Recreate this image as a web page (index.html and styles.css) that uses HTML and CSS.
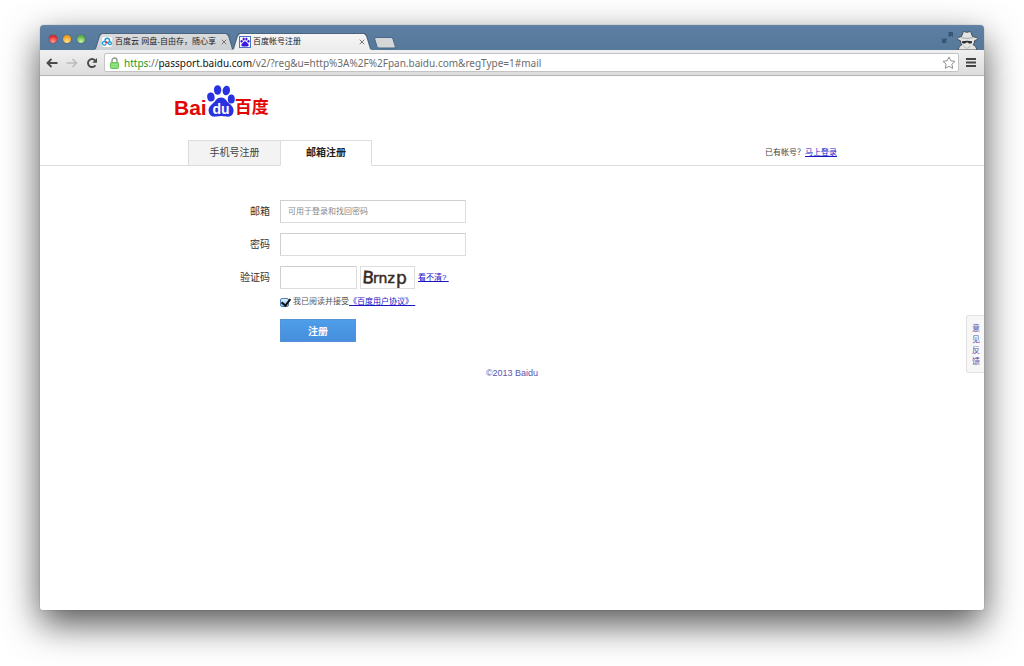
FILE: index.html
```html
<!DOCTYPE html>
<html lang="zh-CN">

<head>
    <meta charset="UTF-8">
    <meta name="viewport" content="width=device-width, initial-scale=1.0">
    <title>百度帐号注册</title>
    <link rel="stylesheet" href="styles.css">
</head>

<body>
    <div class="window">
        <header class="title-bar">
            <div class="window-buttons">
                <button type="button" class="light light-red" aria-label="关闭"></button>
                <button type="button" class="light light-yellow" aria-label="最小化"></button>
                <button type="button" class="light light-green" aria-label="缩放"></button>
            </div>

            <div class="browser-tabs">
                <div class="browser-tab">
                    <svg class="favicon" viewBox="0 0 12 12">
                        <rect x="1" y="1" width="10" height="10" rx="2" fill="#fff"/>
                        <circle cx="6.3" cy="4.5" r="2.3" fill="none" stroke="#1e9be8" stroke-width="1.4"/>
                        <path d="M5 7.600a1.800 1.800 0 1 1-.6-1.700" fill="none" stroke="#1e9be8" stroke-width="1.300"/>
                        <path d="M6.500 6.200l2 2.500a1.500 1.500 0 1 0 .2-2.900" fill="none" stroke="#1e9be8" stroke-width="1.300"/>
                        <circle cx="5.300" cy="6.400" r="1.100" fill="#e2382f"/>
                    </svg>
                    <span class="tab-title">百度云 网盘-自由存，随心享</span>
                    <button type="button" class="tab-close" aria-label="关闭标签页">
                        <svg viewBox="0 0 6 6"><path d="M.7.7l4.6 4.6M5.3.7L.7 5.3"/></svg>
                    </button>
                </div>
                <div class="browser-tab active">
                    <svg class="favicon" viewBox="0 0 12 12">
                        <rect x=".5" y=".5" width="11" height="11" fill="#fff" stroke="#4a74c8"/>
                        <g fill="#3a18e0">
                            <ellipse cx="2.6" cy="5.3" rx="1.1" ry="1.4"/>
                            <ellipse cx="4.7" cy="3" rx="1.1" ry="1.5"/>
                            <ellipse cx="7.4" cy="3" rx="1.1" ry="1.5"/>
                            <ellipse cx="9.5" cy="5.3" rx="1.1" ry="1.4"/>
                            <path d="M6 5.2c1.3 0 1.6 1.2 2.5 2s1.4 1.3 1.1 2.2c-.4 1.2-1.8 1.2-3.6 1s-3.2.2-3.6-1c-.3-.9.2-1.4 1.1-2.2s1.2-2 2.5-2z"/>
                        </g>
                    </svg>
                    <span class="tab-title">百度帐号注册</span>
                    <button type="button" class="tab-close" aria-label="关闭标签页">
                        <svg viewBox="0 0 6 6"><path d="M.7.7l4.6 4.6M5.3.7L.7 5.3"/></svg>
                    </button>
                </div>
                <button type="button" class="new-tab" aria-label="新标签页">
                    <svg viewBox="0 0 22 12"><path d="M2 .5h15q1.500 0 2 1.500l2.300 7.500q.3 1.500-1.300 1.500H5q-1.500 0-2-1.500L.7 2Q.4.5 2 .5z" fill="#d4d6d8" stroke="#48678a"/></svg>
                </button>
            </div>

            <button type="button" class="fullscreen" aria-label="全屏">
                <svg viewBox="0 0 11 11" fill="#2f4b68">
                    <path d="M5.800 0H11v5.200L9.300 3.500 7.700 5.100 5.900 3.300 7.500 1.700zM5.200 11H0V5.800L1.700 7.500l1.600-1.600 1.800 1.800L3.500 9.300z"/>
                </svg>
            </button>
            <svg class="incognito" viewBox="0 0 22 19">
                <path d="M5.500 5.500L7 1.500Q7.400.4 8.700.7l2.300.6 2.300-.6q1.300-.3 1.700.8l1.500 4q5 .8 5 2.100 0 1.400-2.800 2-.1 3-1.700 4.100 3.200.8 4 5.300H2q.8-4.500 4-5.300Q4.400 12.600 4.300 9.600q-2.800-.6-2.800-2 0-1.300 4-2.100z" fill="#e4e4e2" stroke="#454d55"/>
                <path d="M5.500 6q5.500 1.600 11 0l.3 1.300q-5.800 1.500-11.600 0z" fill="#b0b1b1"/>
                <path d="M5.800 10.200q5.200-.8 10.400 0l-.4 1.800q-2.200 1.400-3.900-.6h-1.800q-1.700 2-3.900.6z" fill="#2b2c2d"/>
                <path d="M7 15l4 2.500 4-2.500" fill="none" stroke="#bbb"/>
            </svg>
        </header>

        <nav class="toolbar">
            <button type="button" class="tool" aria-label="后退">
                <svg viewBox="0 0 12 10"><path d="M11.500 5H1.800M5.500 1L1.500 5l4 4" fill="none" stroke="#4a4a4a" stroke-width="1.900"/></svg>
            </button>
            <button type="button" class="tool" aria-label="前进">
                <svg viewBox="0 0 12 10"><path d="M.5 5h9.700M6.500 1l4 4-4 4" fill="none" stroke="#bcbcbc" stroke-width="1.700"/></svg>
            </button>
            <button type="button" class="tool" aria-label="重新加载">
                <svg viewBox="0 0 12 10"><path d="M9.400 7.200A4 4 0 1 1 9 2.400" fill="none" stroke="#4a4a4a" stroke-width="1.900"/><path d="M11 0v4.800H6.300z" fill="#4a4a4a"/></svg>
            </button>
            <div class="address-bar">
                <svg class="lock" viewBox="0 0 9 12">
                    <path d="M2 6V3.500a2.500 2.500 0 0 1 5 0V6" fill="none" stroke="#8f9a8c" stroke-width="1.400"/>
                    <rect x=".5" y="5.500" width="8" height="6" rx=".8" fill="#7edb6c" stroke="#6cc25f"/>
                    <path d="M1.500 7.500h6M1.500 9.500h6" stroke="#98e58a"/>
                </svg>
                <div class="url" role="textbox" contenteditable="true" spellcheck="false" aria-label="地址"><span class="scheme">https</span>://<span class="host">passport.baidu.com</span>/v2/?reg&amp;u=http%3A%2F%2Fpan.baidu.com&amp;regType=1#mail</div>
                <button type="button" class="star" aria-label="收藏">
                    <svg viewBox="0 0 14 13"><path d="M7 .9l1.800 3.900 4.200.5-3.100 2.900.8 4.200L7 10.300l-3.700 2.100.8-4.200L1 5.300l4.200-.5z" fill="#fff" stroke="#909090"/></svg>
                </button>
            </div>
            <button type="button" class="menu" aria-label="菜单">
                <svg viewBox="0 0 10 9"><path d="M0 1h10M0 4.500h10M0 8h10" stroke="#444" stroke-width="2"/></svg>
            </button>
        </nav>

        <main class="page">
            <div class="container">
                <a href="/" class="logo" aria-label="百度首页">
                    <span class="logo-latin">Bai</span>
                    <svg class="paw" viewBox="0 0 28 32">
                        <g fill="#2932e1">
                            <ellipse cx="3.900" cy="12" rx="3.700" ry="4.500" transform="rotate(-8 3.900 12)"/>
                            <ellipse cx="10.600" cy="5" rx="3.700" ry="4.800"/>
                            <ellipse cx="19.300" cy="5.500" rx="3.700" ry="4.800" transform="rotate(10 19.300 5.500)"/>
                            <ellipse cx="24.300" cy="14" rx="3.500" ry="4.500"/>
                            <path d="M14 12.500c4 0 5 3 7.500 5.300 3 2.700 5.600 5 5 8.700-.8 5-4.500 5.500-7 5-3.500-.7-7-.7-10.500 0-2.500.5-6.500 0-7.300-5-.6-3.700 1.800-6 4.800-8.700 2.500-2.300 3.500-5.300 7.500-5.300z"/>
                        </g>
                        <text x="14" y="29" text-anchor="middle" class="paw-text">du</text>
                    </svg>
                    <span class="logo-han">百度</span>
                </a>
            </div>

            <div class="reg-bar">
                <div class="container reg-bar-inner">
                    <div class="reg-tabs">
                        <a href="#phone" class="reg-tab">手机号注册</a>
                        <a href="#mail" class="reg-tab current">邮箱注册</a>
                    </div>
                    <p class="login-tip">已有帐号？<a href="/login">马上登录</a></p>
                </div>
            </div>

            <form class="container reg-form" method="post" action="#mail">
                <div class="form-row">
                    <label for="email">邮箱</label>
                    <input type="text" id="email" name="email" class="text-input" placeholder="可用于登录和找回密码">
                </div>
                <div class="form-row">
                    <label for="password">密码</label>
                    <input type="password" id="password" name="password" class="text-input">
                </div>
                <div class="form-row">
                    <label for="verifycode">验证码</label>
                    <input type="text" id="verifycode" name="verifycode" class="text-input code-input">
                    <svg class="captcha" viewBox="0 0 53 21" role="img" aria-label="验证码图片">
                        <text x="1" y="16" transform="rotate(4 1 16)">B</text>
                        <text x="12" y="16" class="small">rnz</text>
                        <text x="35" y="17">p</text>
                    </svg>
                    <a href="#change">看不清?&nbsp;</a>
                </div>
                <div class="form-row agree">
                    <input type="checkbox" id="agree" name="agree" checked>
                    <label for="agree">我已阅读并接受</label><a href="#protocol">《百度用户协议》&nbsp;</a>
                </div>
                <button type="submit" class="submit-button">注册</button>
            </form>

            <footer class="footer">©2013 Baidu</footer>

            <a href="#feedback" class="feedback">意见反馈</a>
        </main>
    </div>
</body>

</html>
```

FILE: styles.css
```css
:root {
    --sans: "Liberation Sans", "Noto Sans CJK SC", sans-serif;
    --link: #1a12c8;
    --border: #dddddd;
}

* {
    margin: 0;
    padding: 0;
    box-sizing: border-box;
}

body {
    display: flex;
    min-height: 100vh;
    padding: 25px 40px 56px;
    background-color: #ffffff;
    font-family: var(--sans);
    font-size: 8px;
    color: #444;
}

svg {
    display: block;
}

button {
    border: none;
    background: none;
    font-family: inherit;
    cursor: pointer;
}

a {
    color: var(--link);
}

.window {
    flex: 1;
    display: flex;
    flex-direction: column;
    border-radius: 4px 4px 2px 2px;
    background-color: #ffffff;
    box-shadow: 0 0 1px rgba(0, 0, 0, 0.5), 0 14px 36px rgba(0, 0, 0, 0.68);
}

/* Title bar */
.title-bar {
    display: flex;
    align-items: flex-end;
    height: 25px;
    padding-right: 6px;
    border-radius: 4px 4px 0 0;
    background: linear-gradient(#6687a8, #5c7fa3 2px, #567899);
}

.window-buttons {
    display: flex;
    gap: 6px;
    padding: 0 8px 7px 9px;
}

.light {
    width: 8px;
    height: 8px;
    border-radius: 50%;
    box-shadow: 0 0 1px #223;
}

.light-red {
    background: radial-gradient(circle at 50% 80%, #ff9d8e, #e0252a 70%);
}

.light-yellow {
    background: radial-gradient(circle at 50% 80%, #ffe58a, #eb9b1f 70%);
}

.light-green {
    background: radial-gradient(circle at 50% 80%, #c8f5a0, #58b043 70%);
}

.browser-tabs {
    flex: 1;
    display: flex;
    align-items: flex-end;
}

.browser-tab {
    position: relative;
    display: flex;
    align-items: center;
    width: 142px;
    height: 17px;
    padding: 0 8px;
    margin-right: -4px;
    color: #222;
}

.browser-tab::before,
.browser-tab::after {
    content: "";
    position: absolute;
    inset: 0;
    background-color: #4a6480;
    clip-path: polygon(0 100%, 2px 94%, 6px 12%, 8px 0, calc(100% - 8px) 0, calc(100% - 6px) 12%, calc(100% - 2px) 94%, 100% 100%);
}

.browser-tab::after {
    inset: 1px 1px 0;
    background: linear-gradient(#d9dbdd, #cdd0d3);
}

.browser-tab.active::after {
    background: linear-gradient(#f6f6f6, #ececec);
}

.browser-tab > * {
    position: relative;
    z-index: 1;
}

.favicon {
    width: 12px;
    height: 12px;
    margin-right: 2px;
}

.tab-title {
    flex: 1;
    overflow: hidden;
    white-space: nowrap;
    line-height: 14px;
}

.tab-close svg {
    width: 6px;
    height: 6px;
    stroke: #777;
}

.new-tab {
    margin: 0 0 1px 5px;
}

.new-tab svg {
    width: 22px;
    height: 12px;
}

.fullscreen {
    margin-bottom: 7px;
    opacity: 0.8;
}

.fullscreen svg {
    width: 11px;
    height: 11px;
}

.incognito {
    width: 22px;
    height: 19px;
    margin-left: 3px;
}

/* Toolbar */
.toolbar {
    display: flex;
    align-items: center;
    height: 26px;
    padding: 0 8px 0 6px;
    border-bottom: 1px solid #b4b4b4;
    background: linear-gradient(#f0f0f0, #dddddd);
}

.tool {
    margin-right: 8px;
}

.tool svg {
    width: 12px;
    height: 10px;
}

.address-bar {
    flex: 1;
    display: flex;
    align-items: center;
    height: 19px;
    padding: 0 2px 0 5px;
    margin: 0 7px 0 -2px;
    border: 1px solid #c4c4c4;
    border-radius: 2px;
    background-color: #ffffff;
}

.lock {
    width: 9px;
    height: 12px;
    margin-right: 5px;
}

.url {
    flex: 1;
    overflow: hidden;
    white-space: nowrap;
    font-family: "Noto Sans", "Open Sans", sans-serif;
    font-size: 10px;
    line-height: 16px;
    color: #6c6c6c;
    outline: none;
}

.scheme {
    color: #1a9a1a;
}

.host {
    color: #111;
}

.star svg {
    width: 14px;
    height: 13px;
}

.menu svg {
    width: 10px;
    height: 9px;
}

/* Page */
.page {
    position: relative;
    flex: 1;
    display: flex;
    flex-direction: column;
}

.container {
    width: 100%;
    max-width: 676px;
    margin: 0 auto;
}

.logo {
    display: inline-flex;
    align-items: flex-end;
    height: 41px;
    color: #e10602;
    font-weight: 700;
    text-decoration: none;
}

.logo-latin {
    font-size: 21px;
    line-height: 18px;
}

.paw {
    width: 28px;
    height: 32px;
}

.paw-text {
    font-family: var(--sans);
    font-size: 14px;
    font-weight: 700;
    fill: #ffffff;
}

.logo-han {
    font-size: 17px;
    line-height: 18px;
}

.reg-bar {
    margin-top: 23px;
    border-bottom: 1px solid var(--border);
}

.reg-bar-inner {
    display: flex;
    justify-content: space-between;
    align-items: center;
    height: 25px;
    padding: 0 13px 0 14px;
}

.reg-tabs {
    display: flex;
    margin-bottom: -1px;
}

.reg-tab {
    width: 92px;
    height: 26px;
    border: 1px solid var(--border);
    border-right: none;
    background-color: #f3f3f3;
    color: #444;
    font-size: 10px;
    line-height: 24px;
    text-align: center;
    text-decoration: none;
}

.reg-tab.current {
    border-right: 1px solid var(--border);
    border-bottom-color: #ffffff;
    background-color: #ffffff;
    color: #222;
    font-weight: 700;
}

.login-tip {
    line-height: 12px;
}

.reg-form {
    display: flex;
    flex-direction: column;
    padding: 34px 0 0 56px;
}

.form-row {
    display: flex;
    align-items: center;
    margin-bottom: 10px;
    line-height: 14px;
}

.form-row > label {
    width: 40px;
    margin-right: 10px;
    font-size: 10px;
    text-align: right;
    color: #333;
}

.text-input {
    width: 186px;
    height: 23px;
    padding: 0 7px;
    border: 1px solid var(--border);
    border-top-color: #cfcfcf;
    border-left-color: #cfcfcf;
    font-family: var(--sans);
    font-size: 8px;
    outline: none;
}

.text-input::placeholder {
    color: #888;
}

.code-input {
    width: 77px;
}

.captcha {
    width: 55px;
    height: 23px;
    margin: 0 3px;
    border: 1px solid var(--border);
    font-family: "DejaVu Sans", sans-serif;
    font-size: 17px;
    fill: #3b2a20;
    stroke: #3b2a20;
    stroke-width: 0.5;
}

.captcha .small {
    font-size: 14px;
}

.form-row.agree {
    height: 12px;
    padding-left: 50px;
    margin: -3px 0 11px;
}

.form-row.agree label {
    width: auto;
    margin: 0;
    font-size: 8px;
    color: #555;
}

.agree input {
    appearance: none;
    width: 9px;
    height: 9px;
    margin-right: 4px;
    border: 1px solid #4b7fb5;
    border-radius: 2px;
    background: linear-gradient(#e4f1fc, #8dc0ee);
}

.agree input:checked::before {
    content: "";
    display: block;
    width: 4px;
    height: 7px;
    margin: -2px 0 0 2px;
    border: solid #111;
    border-width: 0 2px 2px 0;
    transform: rotate(38deg);
}

.submit-button {
    width: 76px;
    height: 23px;
    margin-left: 50px;
    border: 1px solid #5693d6;
    background: linear-gradient(#4f9ee9, #458edd);
    color: #ffffff;
    font-size: 10px;
    font-weight: 700;
}

.footer {
    margin-top: 25px;
    text-align: center;
    font-size: 9px;
    line-height: 12px;
    color: #5a55b0;
}

/* Feedback tab pinned to the right edge */
.feedback {
    position: absolute;
    top: 239px;
    right: 0;
    width: 18px;
    padding: 7px 4px 5px 5px;
    border: 1px solid #e2e2e2;
    border-right: none;
    border-radius: 3px 0 0 3px;
    background-color: #f7f7f7;
    color: #5553a8;
    line-height: 11px;
    text-decoration: none;
}
```
